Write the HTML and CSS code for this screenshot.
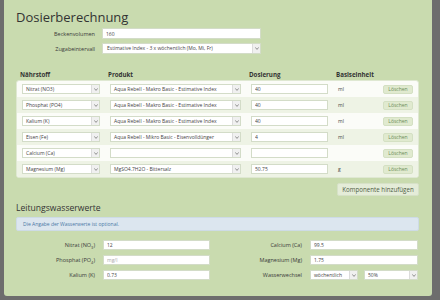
FILE: index.html
```html
<!DOCTYPE html>
<html lang="de">
<head>
<meta charset="UTF-8">
<title>Dosierberechnung</title>
<link rel="stylesheet" href="styles.css">
</head>
<body>

<div class="page">
    <h1>Dosierberechnung</h1>

    <div class="form-top">
        <label for="volume">Beckenvolumen</label>
        <input type="text" id="volume" value="160">
        <label>Zugabeintervall</label>
        <div class="select">
            <span class="value">Estimative Index - 3 x wöchentlich (Mo, Mi, Fr)</span>
            <span class="arrow"><svg width="4" height="3" viewBox="0 0 4 3"><path d="M0.3 0.4 L2 2.4 L3.7 0.4" fill="none" stroke="#777" stroke-width="0.8"/></svg></span>
        </div>
    </div>

    <div class="grid head">
        <span>Nährstoff</span>
        <span>Produkt</span>
        <span>Dosierung</span>
        <span>Basiseinheit</span>
        <span></span>
    </div>

    <div class="table" id="components"></div>

    <div class="actions">
        <button class="btn-add">Komponente hinzufügen</button>
    </div>

    <h2>Leitungswasserwerte</h2>
    <div class="info">Die Angabe der Wasserwerte ist optional.</div>

    <div class="water">
        <label>Nitrat (NO<sub>3</sub>)</label>
        <input type="text" value="12">
        <label>Calcium (Ca)</label>
        <input type="text" value="99.5">

        <label>Phosphat (PO<sub>4</sub>)</label>
        <input type="text" placeholder="mg/l">
        <label>Magnesium (Mg)</label>
        <input type="text" value="1.75">

        <label>Kalium (K)</label>
        <input type="text" value="0.73">
        <label>Wasserwechsel</label>
        <div class="pair">
            <div class="select small">
                <span class="value">wöchentlich</span>
                <span class="arrow"><svg width="4" height="3" viewBox="0 0 4 3"><path d="M0.3 0.4 L2 2.4 L3.7 0.4" fill="none" stroke="#777" stroke-width="0.8"/></svg></span>
            </div>
            <div class="select small wide">
                <span class="value">50%</span>
                <span class="arrow"><svg width="4" height="3" viewBox="0 0 4 3"><path d="M0.3 0.4 L2 2.4 L3.7 0.4" fill="none" stroke="#777" stroke-width="0.8"/></svg></span>
            </div>
        </div>
    </div>
</div>

<script>
var components = [
    ["Nitrat (NO3)", "Aqua Rebell - Makro Basic - Estimative Index", "40", "ml"],
    ["Phosphat (PO4)", "Aqua Rebell - Makro Basic - Estimative Index", "40", "ml"],
    ["Kalium (K)", "Aqua Rebell - Makro Basic - Estimative Index", "40", "ml"],
    ["Eisen (Fe)", "Aqua Rebell - Mikro Basic - Eisenvolldünger", "4", "ml"],
    ["Calcium (Ca)", "", "", ""],
    ["Magnesium (Mg)", "MgSO4.7H2O - Bittersalz", "50.75", "g"]
];

var arrow = '<span class="arrow"><svg width="4" height="3" viewBox="0 0 4 3"><path d="M0.3 0.4 L2 2.4 L3.7 0.4" fill="none" stroke="#777" stroke-width="0.8"/></svg></span>';

function addRow(c) {
    let row = document.createElement("div");
    row.className = "grid row";
    row.innerHTML =
        '<div class="select"><span class="value">' + c[0] + '</span>' + arrow + '</div>' +
        '<div class="select"><span class="value">' + c[1] + '</span>' + arrow + '</div>' +
        '<input type="text" value="' + c[2] + '">' +
        '<span class="unit">' + c[3] + '</span>' +
        '<button class="btn-delete">Löschen</button>';
    row.querySelector(".btn-delete").onclick = () => row.remove();
    document.getElementById("components").appendChild(row);
}

components.forEach(addRow);
</script>

</body>
</html>
```

FILE: styles.css
```css
html {
    background-color: #6d6d6d;
}

body {
    margin: 0;
    font-family: "Open Sans", sans-serif;
    color: #333;
}

.page {
    width: 403px;
    margin: 0 8px 0 4px;
    padding: 9px 13px 16px 12px;
    background-color: #c9dbaf;
    border-radius: 0 0 3px 3px;
}

h1 {
    margin: 0;
    font-size: 13px;
    font-weight: 400;
    line-height: 16px;
}

h2 {
    margin: 6px 0 3px;
    font-size: 8.6px;
    font-weight: 400;
    line-height: 12px;
}

input {
    box-sizing: border-box;
    height: 10px;
    padding: 0 3px;
    border: 1px solid #d3dcc8;
    background-color: #fff;
    font-family: "Open Sans", sans-serif;
    font-size: 5px;
    color: #444;
    outline: none;
}

input::placeholder {
    color: #aaa;
}

.select {
    box-sizing: border-box;
    display: flex;
    height: 10px;
    border: 1px solid #d3dcc8;
    background-color: #fff;
    font-size: 5px;
    color: #444;
}

.select .value {
    flex: 1;
    padding-left: 3px;
    line-height: 8px;
    white-space: nowrap;
    overflow: hidden;
}

.select .arrow {
    display: flex;
    align-items: center;
    justify-content: center;
    width: 7px;
    border-left: 1px solid #dcdcdc;
    background-color: #f0f0f0;
}

/* top form */
.form-top {
    display: grid;
    grid-template-columns: 79px 159px;
    column-gap: 7px;
    row-gap: 4px;
    margin-top: 3px;
    align-items: center;
}

.form-top label,
.water label {
    text-align: right;
    font-size: 5.5px;
    line-height: 10px;
    color: #3a3a3a;
}

.form-top input,
.form-top .select {
    height: 11px;
}

.form-top .select .value {
    line-height: 9px;
    padding-left: 4px;
}

/* components table */
.grid {
    display: grid;
    grid-template-columns: 78px 131px 77px 1fr 30px;
    column-gap: 10px;
    align-items: center;
}

.head {
    margin-top: 15px;
    padding: 0 5px 0 4px;
    height: 11px;
    font-size: 6.2px;
    font-weight: 700;
    color: #333;
}

.table {
    border: 1px solid #dfe8d2;
    border-radius: 3px;
    background-color: #fbfcf8;
    overflow: hidden;
}

.row {
    height: 16px;
    padding: 0 5px;
}

.row:nth-child(even) {
    background-color: #eef3e5;
}

.unit {
    font-size: 5px;
    color: #444;
}

.btn-delete {
    height: 9px;
    padding: 0;
    border: 1px solid #d4e0c3;
    border-radius: 2px;
    background-color: #e0eacf;
    font-family: "Open Sans", sans-serif;
    font-size: 5px;
    color: #6b8a57;
    cursor: pointer;
}

.actions {
    display: flex;
    justify-content: flex-end;
    margin-top: 5px;
}

.btn-add {
    width: 82px;
    height: 13px;
    padding: 0;
    border: 1px solid #d6e1c7;
    border-radius: 2px;
    background-color: #e4ecd8;
    font-family: "Open Sans", sans-serif;
    font-size: 6.2px;
    color: #4e5c44;
    cursor: pointer;
}

/* water values */
.info {
    box-sizing: border-box;
    height: 14px;
    padding: 0 6px;
    border: 1px solid #cddbe6;
    border-radius: 2px;
    background-color: #dce6ef;
    font-size: 5px;
    line-height: 12px;
    color: #4a78a5;
}

.water {
    display: grid;
    grid-template-columns: 79px 107px 84px 108px;
    column-gap: 8px;
    row-gap: 5px;
    margin-top: 9px;
    align-items: center;
}

.water sub {
    font-size: 4px;
    line-height: 0;
}

.pair {
    display: flex;
    gap: 6px;
}

.select.small {
    width: 48px;
}

.select.small.wide {
    width: 54px;
}
```
